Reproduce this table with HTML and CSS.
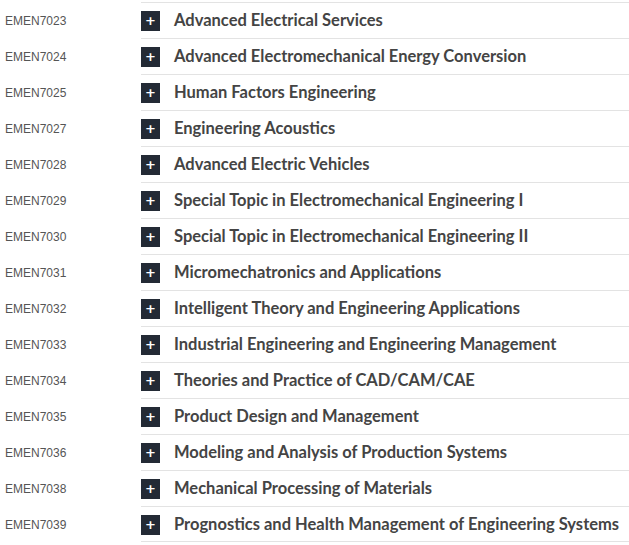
FILE: index.html
```html
<!DOCTYPE html>
<html>
<head>
<meta charset="utf-8">
<link rel="stylesheet" href="styles.css">
</head>
<body>
<div class="list">
  <div class="row"><div class="code">EMEN7023</div><div class="main"><span class="toggle">+</span><span class="title">Advanced Electrical Services</span></div></div>
  <div class="row"><div class="code">EMEN7024</div><div class="main"><span class="toggle">+</span><span class="title">Advanced Electromechanical Energy Conversion</span></div></div>
  <div class="row"><div class="code">EMEN7025</div><div class="main"><span class="toggle">+</span><span class="title">Human Factors Engineering</span></div></div>
  <div class="row"><div class="code">EMEN7027</div><div class="main"><span class="toggle">+</span><span class="title">Engineering Acoustics</span></div></div>
  <div class="row"><div class="code">EMEN7028</div><div class="main"><span class="toggle">+</span><span class="title">Advanced Electric Vehicles</span></div></div>
  <div class="row"><div class="code">EMEN7029</div><div class="main"><span class="toggle">+</span><span class="title">Special Topic in Electromechanical Engineering I</span></div></div>
  <div class="row"><div class="code">EMEN7030</div><div class="main"><span class="toggle">+</span><span class="title">Special Topic in Electromechanical Engineering II</span></div></div>
  <div class="row"><div class="code">EMEN7031</div><div class="main"><span class="toggle">+</span><span class="title">Micromechatronics and Applications</span></div></div>
  <div class="row"><div class="code">EMEN7032</div><div class="main"><span class="toggle">+</span><span class="title">Intelligent Theory and Engineering Applications</span></div></div>
  <div class="row"><div class="code">EMEN7033</div><div class="main"><span class="toggle">+</span><span class="title">Industrial Engineering and Engineering Management</span></div></div>
  <div class="row"><div class="code">EMEN7034</div><div class="main"><span class="toggle">+</span><span class="title">Theories and Practice of CAD/CAM/CAE</span></div></div>
  <div class="row"><div class="code">EMEN7035</div><div class="main"><span class="toggle">+</span><span class="title">Product Design and Management</span></div></div>
  <div class="row"><div class="code">EMEN7036</div><div class="main"><span class="toggle">+</span><span class="title">Modeling and Analysis of Production Systems</span></div></div>
  <div class="row"><div class="code">EMEN7038</div><div class="main"><span class="toggle">+</span><span class="title">Mechanical Processing of Materials</span></div></div>
  <div class="row last"><div class="code">EMEN7039</div><div class="main"><span class="toggle">+</span><span class="title">Prognostics and Health Management of Engineering Systems</span></div></div>
</div>
</body>
</html>
```
FILE: styles.css
```css
html, body {
  margin: 0;
  padding: 0;
  background: #fff;
}
.list {
  padding-top: 2px;
  width: 629px;
  overflow: hidden;
}
.row {
  display: flex;
  height: 36px;
}
.code {
  flex: none;
  width: 141px;
  padding-left: 5px;
  padding-top: 2px;
  box-sizing: border-box;
  font-family: "Liberation Sans", Arial, sans-serif;
  font-size: 12px;
  color: #555;
  display: flex;
  align-items: center;
}
.main {
  flex: 1;
  border-top: 1px solid #e3e3e3;
  display: flex;
  align-items: center;
  padding-top: 1px;
  white-space: nowrap;
}
.row.last .main {
  border-bottom: 1px solid #e3e3e3;
}
.toggle {
  flex: none;
  width: 19px;
  height: 20px;
  background: #232a35;
  color: #fff;
  font-family: "DejaVu Sans", sans-serif;
  font-weight: bold;
  font-size: 13px;
  line-height: 20px;
  text-align: center;
  margin-right: 14px;
}
.title {
  font-family: "Lato", sans-serif;
  font-weight: 700;
  font-size: 16.5px;
  color: #444;
  margin-bottom: 2px;
}
```
